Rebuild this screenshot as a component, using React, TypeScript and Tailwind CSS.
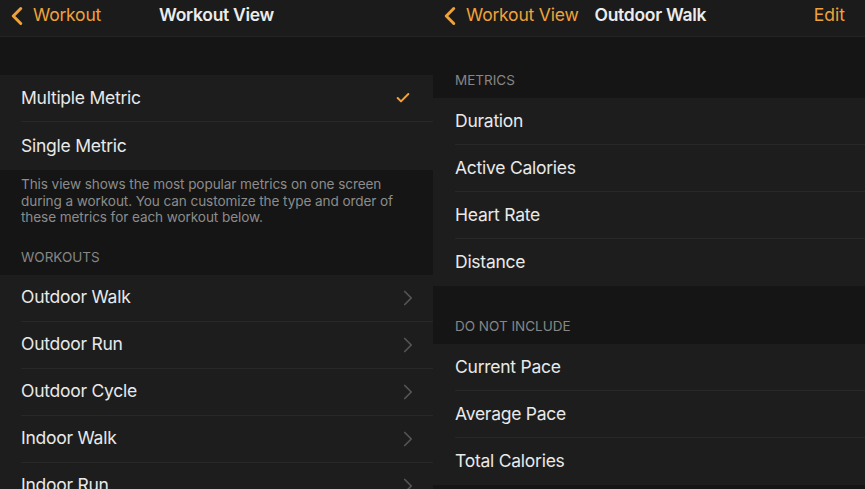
import { Check, ChevronLeft, ChevronRight } from 'lucide-react';

const font = { fontFamily: 'Inter, "Noto Sans", sans-serif' };

interface NavBarProps {
  back: string;
  title: string;
  action?: string;
  centered?: boolean;
}

// iOS style navigation bar with an orange back button
function NavBar({ back, title, action, centered }: NavBarProps) {
  return (
    <div className="relative flex h-[37px] shrink-0 items-center border-b border-[#252525] bg-[#1b1b1b] pb-[6px] pl-[2px] pr-[20px]">
      <div className="flex items-center text-[#f0a23a]">
        <ChevronLeft size={30} strokeWidth={2.4} className="mt-[1px]" />
        <span className="ml-[1px] text-[17.5px] tracking-[-0.2px]">{back}</span>
      </div>
      {centered ? (
        <span className="absolute left-1/2 -translate-x-1/2 text-[17.5px] font-semibold tracking-[-0.3px] text-[#ececec]">
          {title}
        </span>
      ) : (
        <span className="ml-[16px] text-[17.5px] font-semibold tracking-[-0.3px] text-[#ececec]">{title}</span>
      )}
      {action && <span className="ml-auto text-[17.5px] text-[#f0a23a]">{action}</span>}
    </div>
  );
}

interface RowProps {
  label: string;
  inset: string;
  last?: boolean;
  tall?: boolean;
  trailing?: 'check' | 'chevron';
}

function Row({ label, inset, last, tall, trailing }: RowProps) {
  return (
    <div className={`shrink-0 bg-[#1d1d1e] ${tall ? 'h-[48px]' : 'h-[47px]'} ${inset}`}>
      <div
        className={`flex h-[47px] items-center pr-[21px] ${last ? '' : 'border-b border-[#282828]'}`}
      >
        <span className="text-[17.5px] tracking-[-0.25px] text-[#e9e9e9]">{label}</span>
        {trailing === 'check' && (
          <Check size={16} strokeWidth={3} className="ml-auto mr-[1px] text-[#f0a23a]" />
        )}
        {trailing === 'chevron' && (
          <ChevronRight size={26} strokeWidth={1.6} className="ml-auto -mr-[9px] text-[#555555]" />
        )}
      </div>
    </div>
  );
}

function SectionHeader({ title, inset }: { title: string; inset: string }) {
  return (
    <div className={`shrink-0 pb-[10px] text-[13.5px] leading-[16px] uppercase text-[#868686] ${inset}`}>
      {title}
    </div>
  );
}

const workouts = ['Outdoor Walk', 'Outdoor Run', 'Outdoor Cycle', 'Indoor Walk', 'Indoor Run'];
const metrics = ['Duration', 'Active Calories', 'Heart Rate', 'Distance'];
const excluded = ['Current Pace', 'Average Pace', 'Total Calories'];

export default function App() {
  return (
    <div className="flex h-[489px] w-[865px] overflow-hidden bg-[#151515]" style={font}>
      {/* Workout View screen */}
      <div className="flex w-[433px] shrink-0 flex-col">
        <NavBar back="Workout" title="Workout View" centered />
        <div className="h-[38px] shrink-0" />
        <Row label="Multiple Metric" inset="pl-[21px]" tall trailing="check" />
        <Row label="Single Metric" inset="pl-[21px]" last />
        <p className="shrink-0 px-[21px] pt-[6px] text-[13.6px] leading-[16.5px] tracking-[-0.1px] text-[#8c8c8c]">
          This view shows the most popular metrics on one screen during a workout. You can customize the
          type and order of these metrics for each workout below.
        </p>
        <div className="h-[23px] shrink-0" />
        <SectionHeader title="Workouts" inset="px-[21px]" />
        {workouts.map((w) => (
          <Row key={w} label={w} inset="pl-[21px]" trailing="chevron" />
        ))}
      </div>

      {/* Outdoor Walk screen */}
      <div className="flex flex-1 flex-col">
        <NavBar back="Workout View" title="Outdoor Walk" action="Edit" />
        <div className="h-[35px] shrink-0" />
        <SectionHeader title="Metrics" inset="px-[22px]" />
        {metrics.map((m, i) => (
          <Row key={m} label={m} inset="pl-[22px]" last={i === metrics.length - 1} />
        ))}
        <div className="h-[32px] shrink-0" />
        <SectionHeader title="Do Not Include" inset="px-[22px]" />
        {excluded.map((m, i) => (
          <Row key={m} label={m} inset="pl-[22px]" last={i === excluded.length - 1} />
        ))}
      </div>
    </div>
  );
}
